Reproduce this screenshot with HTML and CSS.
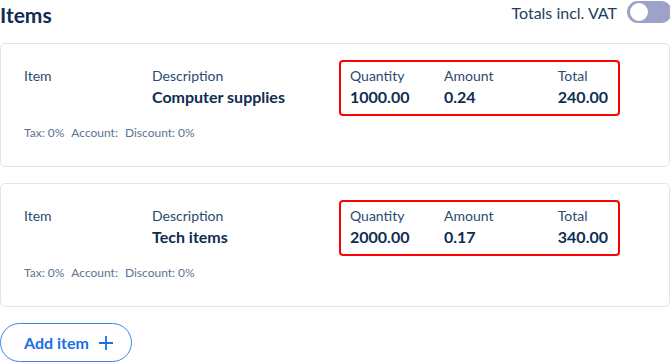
FILE: index.html
```html
<!DOCTYPE html>
<html lang="en">
<head>
  <meta charset="UTF-8" />
  <title>Items</title>
  <link rel="stylesheet" href="styles.css">
</head>
<body>

  <!-- Header -->
  <div class="items-head">
    <h2>Items</h2>
    <label class="vat">
      <span>Totals incl. VAT</span>
      <span class="switch"><span class="knob"></span></span>
    </label>
  </div>

  <!-- Item 1 -->
  <div class="item-card">
    <div class="item-row">
      <div class="col col-item">
        <div class="lbl">Item</div>
      </div>
      <div class="col col-desc">
        <div class="lbl">Description</div>
        <div class="val">Computer supplies</div>
      </div>
      <div class="figures">
        <div class="col col-qty">
          <div class="lbl">Quantity</div>
          <div class="val">1000.00</div>
        </div>
        <div class="col col-amt">
          <div class="lbl">Amount</div>
          <div class="val">0.24</div>
        </div>
        <div class="col col-tot">
          <div class="lbl">Total</div>
          <div class="val">240.00</div>
        </div>
      </div>
    </div>
    <div class="meta">
      <span>Tax: 0%</span>
      <span>Account:</span>
      <span>Discount: 0%</span>
    </div>
  </div>

  <!-- Item 2 -->
  <div class="item-card">
    <div class="item-row">
      <div class="col col-item">
        <div class="lbl">Item</div>
      </div>
      <div class="col col-desc">
        <div class="lbl">Description</div>
        <div class="val">Tech items</div>
      </div>
      <div class="figures">
        <div class="col col-qty">
          <div class="lbl">Quantity</div>
          <div class="val">2000.00</div>
        </div>
        <div class="col col-amt">
          <div class="lbl">Amount</div>
          <div class="val">0.17</div>
        </div>
        <div class="col col-tot">
          <div class="lbl">Total</div>
          <div class="val">340.00</div>
        </div>
      </div>
    </div>
    <div class="meta">
      <span>Tax: 0%</span>
      <span>Account:</span>
      <span>Discount: 0%</span>
    </div>
  </div>

  <button class="add-btn">
    Add item
    <svg width="16" height="16" viewBox="0 0 16 16"><path d="M8 1v14M1 8h14" stroke="#1a6fe6" stroke-width="1.8" fill="none"/></svg>
  </button>

</body>
</html>
```

FILE: styles.css
```css
body {
  font-family: 'Lato', 'Liberation Sans', sans-serif;
  margin: 0;
  background: #fff;
  color: #0f2d52;
  overflow: hidden;
}

/* ==== Header ==== */
.items-head {
  display: flex;
  align-items: center;
  justify-content: space-between;
  height: 28px;
  margin-bottom: 15px;
}
.items-head h2 {
  margin: 0;
  font-size: 21px;
  font-weight: 700;
  color: #0f2d52;
}
.vat {
  display: flex;
  align-items: center;
  gap: 10px;
  font-size: 16px;
  color: #1d3d62;
  margin-right: -2px;
  margin-top: -4px;
}
.switch {
  position: relative;
  width: 45px;
  height: 22px;
  border-radius: 11px;
  background: #9ea1c9;
}
.switch .knob {
  position: absolute;
  left: 1px;
  top: 0;
  width: 18px;
  height: 18px;
  border-radius: 50%;
  background: #fff;
  border: 2px solid #9ea1c9;
}

/* ==== Item cards ==== */
.item-card {
  border: 1px solid #e2e5ee;
  border-radius: 5px;
  padding: 16px 23px 23px;
  margin-bottom: 16px;
  height: 83px;
}
.item-row {
  display: flex;
  align-items: flex-start;
}
.col .lbl {
  font-size: 14px;
  line-height: 20px;
  color: #2b4a6e;
}
.col .val {
  font-size: 16px;
  line-height: 22px;
  font-weight: 700;
  color: #0f2d52;
}
.col-item,
.col-desc {
  padding-top: 6px;
}
.col-item { width: 128px; }
.col-desc { width: 187px; }

.figures {
  display: flex;
  border: 2px solid #f00;
  border-radius: 4px;
  padding: 4px 10px 6px 9px;
  width: 258px;
}
.col-qty { width: 95px; }
.col-amt { width: 115px; }
.col-tot { flex: 1; }

.meta {
  display: flex;
  gap: 7px;
  margin-top: 8px;
  font-size: 12px;
  line-height: 18px;
  color: #5c7391;
}

/* ==== Add button ==== */
.add-btn {
  display: flex;
  align-items: center;
  gap: 9px;
  height: 39px;
  width: 132px;
  margin-top: 16px;
  padding: 0 0 0 23px;
  border: 1.5px solid #3b87ea;
  border-radius: 20px;
  background: #fff;
  font-family: inherit;
  font-size: 16px;
  font-weight: 700;
  color: #1a6fe6;
  cursor: pointer;
}
```
